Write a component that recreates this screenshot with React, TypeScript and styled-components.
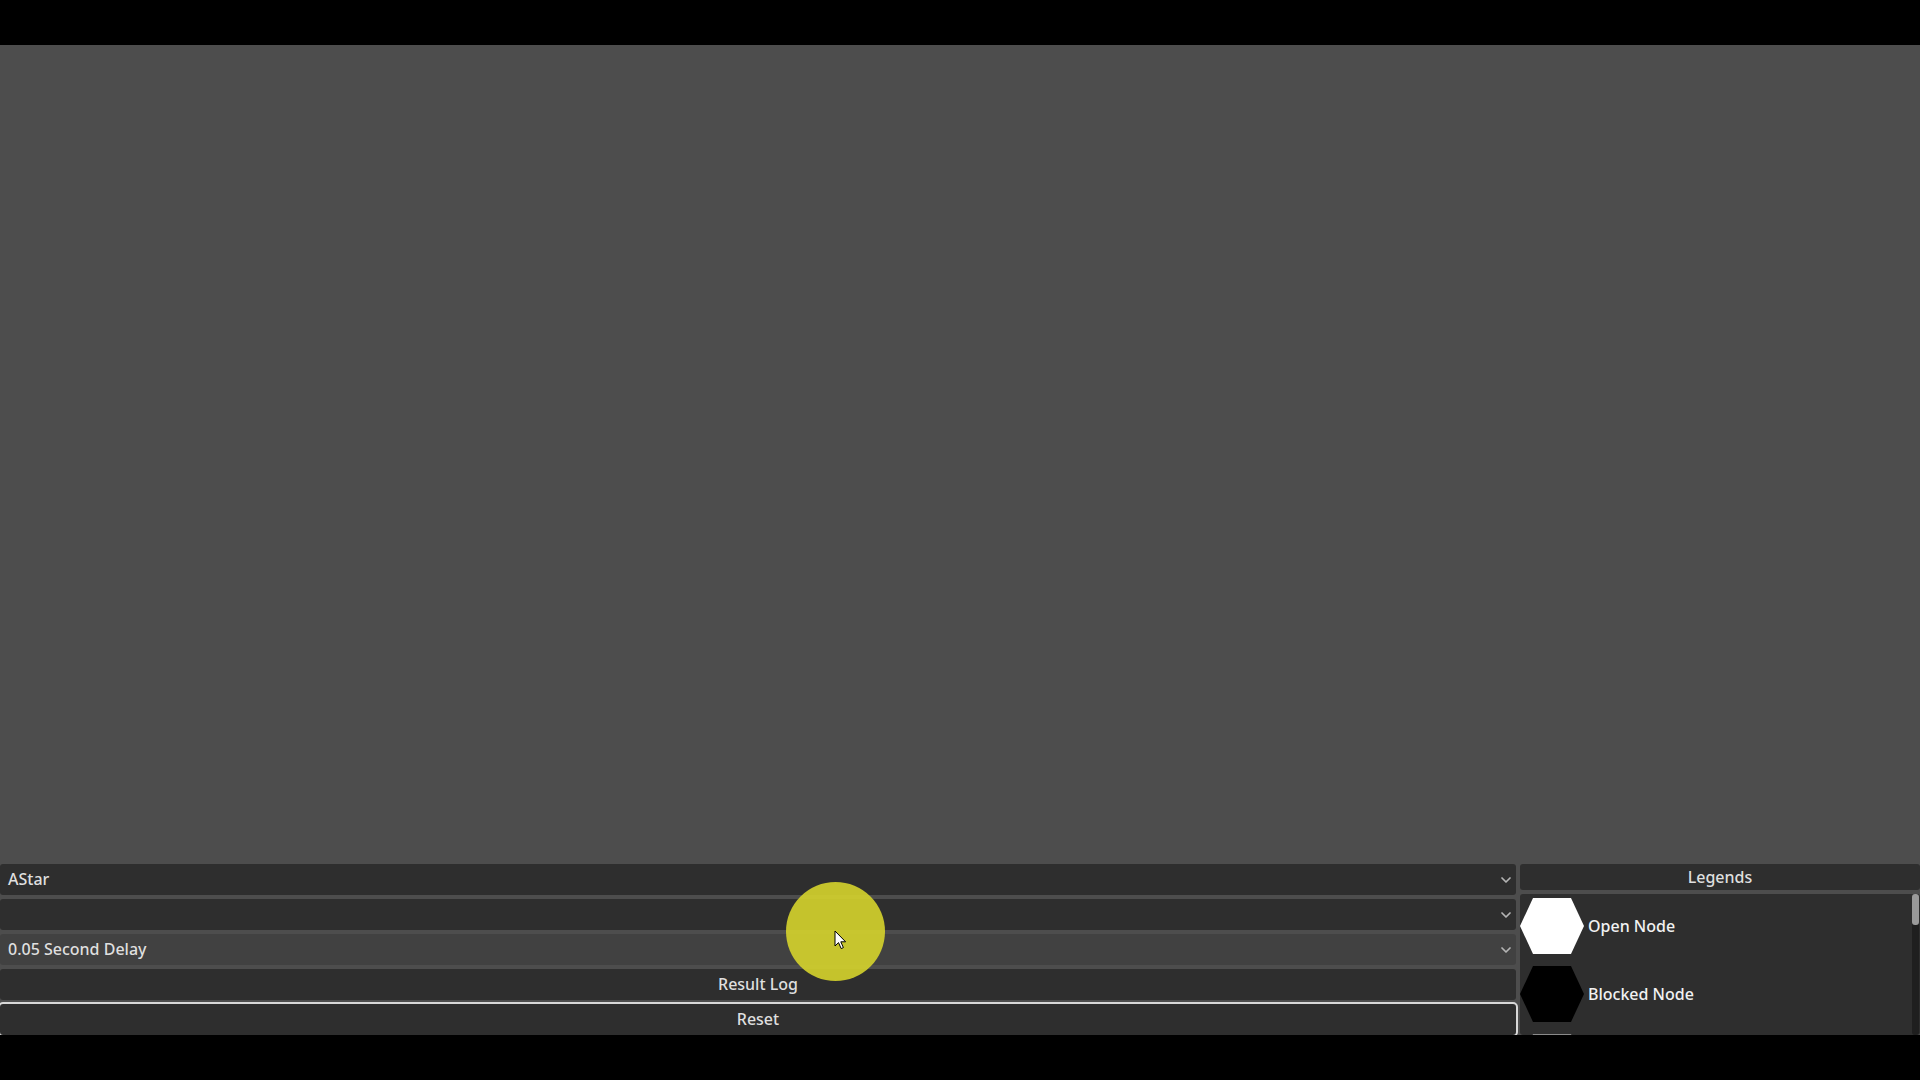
import React from 'react'
import styled, { createGlobalStyle } from 'styled-components'

type Legend = { label?: string; color: string }

// third entry is only peeking out under the bottom edge
const legends: Legend[] = [
  { label: 'Open Node', color: '#ffffff' },
  { label: 'Blocked Node', color: '#000000' },
  { color: '#8a8a8a' },
]

const GlobalStyle = createGlobalStyle`
  html, body {
    margin: 0;
    padding: 0;
    background: #000;
    overflow: hidden;
  }
  body {
    font-family: 'Noto Sans', 'Open Sans', sans-serif;
    font-size: 16px;
    font-weight: 500;
    color: #dfdfdf;
  }
`

const Chevron = () => (
  <svg width="10" height="6" viewBox="0 0 10 6">
    <polyline
      points="1,1 5,5 9,1"
      fill="none"
      stroke="#b4b4b4"
      strokeWidth="1.7"
      strokeLinecap="round"
      strokeLinejoin="round"
    />
  </svg>
)

const Hexagon = ({ color }: { color: string }) => (
  <svg width="64" height="56" viewBox="0 0 64 56">
    <polygon points="0,28 13,0 51,0 64,28 51,56 13,56" fill={color} />
  </svg>
)

const Pointer = () => (
  <svg width="13" height="20" viewBox="0 0 13 20">
    <path
      d="M1 1 L1 16 L4.5 12.6 L7.2 18.6 L9.4 17.6 L6.8 11.8 L11.6 11.8 Z"
      fill="#ffffff"
      stroke="#000000"
      strokeWidth="1"
      strokeLinejoin="round"
    />
  </svg>
)

export default function App() {
  return (
    <Screen>
      <GlobalStyle />
      <Letterbox />
      <Viewport>
        <Canvas />
        <ControlPanel>
          <Controls>
            <Select>
              <span>AStar</span>
              <Chevron />
            </Select>
            <Select>
              <span />
              <Chevron />
            </Select>
            <Select hovered>
              <span>0.05 Second Delay</span>
              <Chevron />
            </Select>
            <ActionButton>Result Log</ActionButton>
            <ActionButton focused>Reset</ActionButton>
          </Controls>
          <LegendColumn>
            <LegendHeader>Legends</LegendHeader>
            <LegendPanel>
              <LegendList>
                {legends.map((l, i) => (
                  <LegendItem key={i}>
                    <Hexagon color={l.color} />
                    {l.label && <span>{l.label}</span>}
                  </LegendItem>
                ))}
              </LegendList>
              <ScrollTrack>
                <ScrollThumb />
              </ScrollTrack>
            </LegendPanel>
          </LegendColumn>
        </ControlPanel>
      </Viewport>
      <Letterbox />
      <ClickHighlight>
        <PointerWrap>
          <Pointer />
        </PointerWrap>
      </ClickHighlight>
    </Screen>
  )
}

const Screen = styled.div`
  position: relative;
  width: 1920px;
  height: 1080px;
  display: flex;
  flex-direction: column;
  background: #000;
  overflow: hidden;
`

const Letterbox = styled.div`
  height: 45px;
  flex-shrink: 0;
  background: #000;
`

const Viewport = styled.div`
  height: 990px;
  flex-shrink: 0;
  display: flex;
  flex-direction: column;
  background: #4d4d4d;
  overflow: hidden;
`

const Canvas = styled.div`
  height: 819px;
  flex-shrink: 0;
`

const ControlPanel = styled.div`
  height: 171px;
  display: grid;
  grid-template-columns: 1516px 1fr;
  column-gap: 4px;
`

const Controls = styled.div`
  display: flex;
  flex-direction: column;
  gap: 4px;
`

const Row = styled.div`
  height: 31px;
  flex-shrink: 0;
  box-sizing: border-box;
  border-radius: 3px;
  background: #2e2e2e;
  line-height: 31px;
  white-space: nowrap;
`

const Select = styled(Row)<{ hovered?: boolean }>`
  display: flex;
  align-items: center;
  justify-content: space-between;
  padding: 0 5px 0 8px;
  background: ${(p) => (p.hovered ? '#414141' : '#2e2e2e')};
`

const ActionButton = styled(Row)<{ focused?: boolean }>`
  text-align: center;
  outline: ${(p) => (p.focused ? '2px solid rgba(255, 255, 255, 0.78)' : 'none')};
  outline-offset: 0;
`

const LegendColumn = styled.div`
  display: flex;
  flex-direction: column;
  gap: 4px;
  min-height: 0;
`

const LegendHeader = styled.div`
  height: 26px;
  flex-shrink: 0;
  border-radius: 3px;
  background: #2e2e2e;
  text-align: center;
  line-height: 26px;
`

const LegendPanel = styled.div`
  flex: 1;
  min-height: 0;
  display: flex;
  border-radius: 3px;
  background: #2e2e2e;
  overflow: hidden;
`

const LegendList = styled.div`
  flex: 1;
  display: flex;
  flex-direction: column;
  gap: 4px;
`

const LegendItem = styled.div`
  height: 64px;
  flex-shrink: 0;
  display: flex;
  align-items: center;
  gap: 4px;
  white-space: nowrap;
  color: #f2f2f2;
`

const ScrollTrack = styled.div`
  width: 7px;
  margin-right: 1px;
  background: #1f1f1f;
  border-radius: 3px;
`

const ScrollThumb = styled.div`
  height: 31px;
  border-radius: 3px;
  background: #9a9a9a;
`

const ClickHighlight = styled.div`
  position: absolute;
  left: 786px;
  top: 882px;
  width: 99px;
  height: 99px;
  border-radius: 50%;
  background: rgba(214, 212, 44, 0.9);
`

const PointerWrap = styled.div`
  position: absolute;
  left: 48px;
  top: 48px;
  line-height: 0;
`
